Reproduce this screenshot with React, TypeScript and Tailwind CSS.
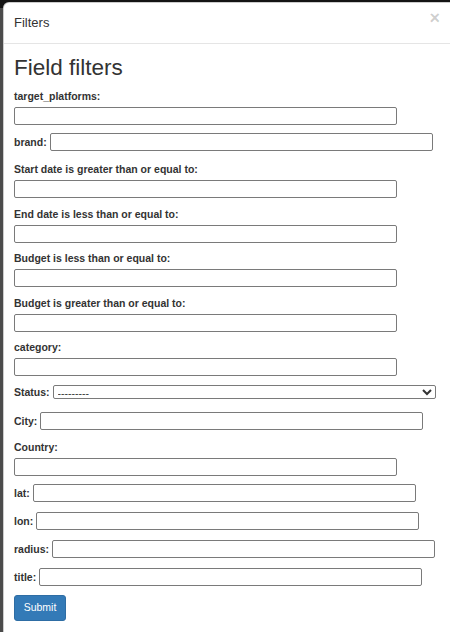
const stacked = [
  "Start date is greater than or equal to:",
  "End date is less than or equal to:",
  "Budget is less than or equal to:",
  "Budget is greater than or equal to:",
  "category:",
];

const inlineTail = ["lat:", "lon:", "radius:", "title:"];

const TextInput = () => (
  <input
    type="text"
    className="h-[18px] w-[383px] rounded-[2px] border border-[#7a7a7a] bg-white px-[2px] text-[10.5px] outline-none"
  />
);

const StackedField = ({ label, className = "" }: { label: string; className?: string }) => (
  <div className={`flex flex-col items-start ${className}`}>
    <label className="mb-[4px] h-[14px] text-[10.5px] font-bold leading-[14px]">{label}</label>
    <TextInput />
  </div>
);

const InlineField = ({ label, className = "" }: { label: string; className?: string }) => (
  <div className={`flex items-center gap-[3px] ${className}`}>
    <label className="text-[10.5px] font-bold leading-[14px]">{label}</label>
    <TextInput />
  </div>
);

const App = () => {
  return (
    <div className="flex h-[632px] w-[450px] items-start overflow-hidden bg-[#141414] font-['Liberation_Sans',Arial,sans-serif] text-[#333]">
      <div className="flex h-full w-[3px] shrink-0 flex-col">
        <div className="h-[8px]" />
        <div className="flex-1 bg-[#4b4b4b]" />
      </div>

      <div className="mt-[2px] w-[448px] shrink-0 rounded-tl-[6px] border border-black/20 bg-white">
        {/* header */}
        <div className="flex items-start justify-between border-b border-[#e5e5e5] px-[10px] pt-[11px] pb-[11px]">
          <h4 className="text-[13px] leading-[18px]">Filters</h4>
          <button className="-mt-[5px] text-[18px] font-bold leading-none text-black/20">×</button>
        </div>

        {/* body */}
        <div className="px-[10px] pt-[11px] pb-[20px]">
          <h3 className="mb-[9px] text-[22.5px] leading-[25px]">Field filters</h3>

          <StackedField label="target_platforms:" className="mb-[8px]" />
          <InlineField label="brand:" className="mb-[11px]" />

          {stacked.map((label) => (
            <StackedField key={label} label={label} className="mb-[8.5px]" />
          ))}

          <div className="mb-[13.5px] flex items-center gap-[3px]">
            <label className="text-[10.5px] font-bold leading-[14px]">Status:</label>
            <select className="h-[14px] w-[383px] rounded-[2px] border border-[#7a7a7a] bg-white text-[10.5px] leading-[12px]">
              <option>---------</option>
              <option>Active</option>
              <option>Inactive</option>
            </select>
          </div>

          <InlineField label="City:" className="mb-[9.5px]" />
          <StackedField label="Country:" className="mb-[8px]" />

          {inlineTail.map((label, i) => (
            <InlineField
              key={label}
              label={label}
              className={i === inlineTail.length - 1 ? "mb-[8.5px]" : "mb-[10px]"}
            />
          ))}

          <button className="h-[26px] w-[52px] rounded-[3px] border border-[#2e6da4] bg-[#337ab7] text-[10.5px] text-white">
            Submit
          </button>
        </div>
      </div>
    </div>
  );
};

export default App;
